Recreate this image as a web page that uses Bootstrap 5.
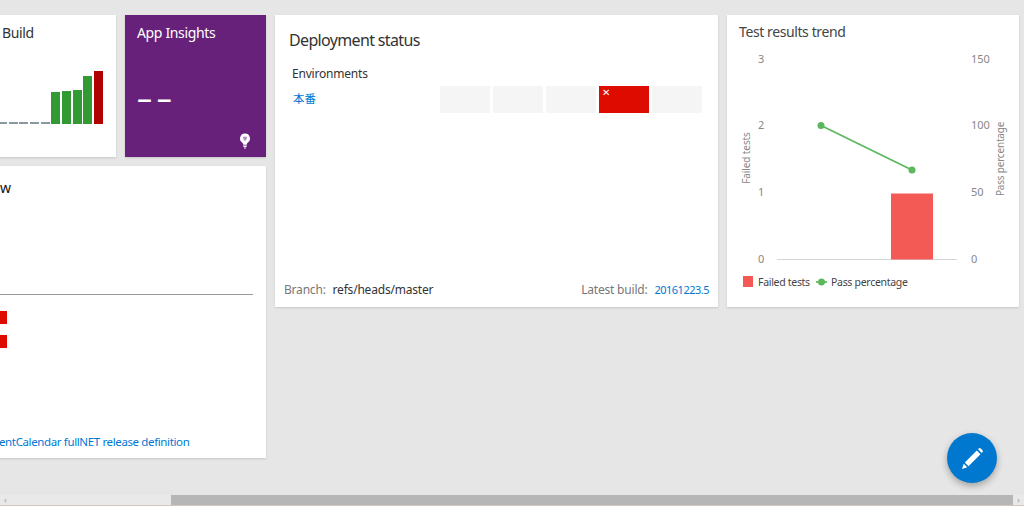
<!DOCTYPE html>
<html lang="en">
<head>
<meta charset="utf-8">
<title>Dashboard</title>
<link href="https://cdn.jsdelivr.net/npm/bootstrap@5.3.0/dist/css/bootstrap.min.css" rel="stylesheet">
<style>
html,body{height:100%}
body{background:#e6e6e6;font-family:"Noto Sans","Noto Sans CJK JP",sans-serif;color:#222;overflow:hidden}
.dash-main{flex:1 1 auto;min-height:0;overflow:hidden}
.dash-grid{display:grid;grid-template-columns:141px 141px 443px 292px;grid-template-rows:142px 141px 142px;gap:9px;margin:15px 0 0 -25px;width:1049px}
.tile{border:0;border-radius:0;background:#fff;box-shadow:0 1px 2px rgba(0,0,0,.14);position:relative;overflow:hidden}
.tile-title{font-size:14px;line-height:20px;color:#333;letter-spacing:-.35px}
.t-build{padding:8px 13px 0 27px}
.spark{height:62px;gap:1.67px;margin-top:19px;margin-left:-27px}
.spark-bar{width:9px;background:#339933}
.spark-bar.idle{background:#8a979e}
.spark-bar.bad{background:#b00000}
.t-insight{background:#68217a;color:#fff;padding:8px 12px}
.t-insight .tile-title{color:#fff}
.dash-value{font-size:30px;line-height:30px;margin-top:40px;letter-spacing:1px;word-spacing:-5px}
.bulb-ico{position:absolute;right:15px;bottom:8px}
.t-over{grid-column:1/3;grid-row:2/4;padding:12px 13px 8px 24px}
.over-title{font-size:14px;line-height:20px;color:#111;text-align:left;padding-left:1px}
.over-rule{height:1px;background:#999;margin-top:96px;margin-left:-24px}
.over-flag{width:32px;height:13px;background:#de0b00;margin-left:-24px;margin-top:11px}
.over-rule + .over-flag{margin-top:16px}
.tile-link{color:#0078d4;text-decoration:none}
.over-link{font-size:11.5px;line-height:16px;white-space:nowrap;letter-spacing:-.37px}
.t-deploy{grid-column:3;grid-row:1/3;padding:14px 9px 9px 9px}
.deploy-title{font-size:16px;line-height:22px;color:#333;padding-left:5px;letter-spacing:-.65px}
.env-head{font-size:12px;line-height:16px;margin:15px 0 0 8px;color:#333;letter-spacing:-.2px}
.env-row{margin:4px 7px 0 9px;height:27px}
.env-name{font-size:11.500px;line-height:16px;margin-top:-1px}
.env-cells{gap:2.6px}
.env-cell{width:50.4px;height:27px;background:#f5f5f5;position:relative}
.env-cell.fail{background:#de0b00;color:#fff}
.env-x{position:absolute;left:3px;top:0;font-size:10px;line-height:12px}
.deploy-foot{font-size:12px;line-height:16px;color:#777;letter-spacing:-.2px}
.deploy-foot b{font-weight:400;color:#333;margin-left:4px}
.deploy-foot a{font-size:11px;margin-left:4px;letter-spacing:-.5px}
.t-test{grid-column:4;grid-row:1/3;padding:8px 0 0 12px}
.trend-title{font-size:14px;line-height:18px;color:#444;letter-spacing:-.4px}
.trend-svg{position:absolute;left:0;top:0}
.trend-svg text{font-family:"Noto Sans",sans-serif;font-size:11px;fill:#888}
.trend-svg text.lg{fill:#444;font-size:10.5px;letter-spacing:-.3px}
.trend-svg text.ax{font-size:10px;letter-spacing:-.1px}
.trend-svg text.ax2{font-size:10px;letter-spacing:-.2px}
.scroll-strip{flex:0 0 11px;background:#e9e9e9;border-bottom:1px solid #cfc9bd}
.scroll-arrow{width:11px;font-size:9px;line-height:10px;color:#999;text-align:center}
.scroll-gap{width:160px}
.scroll-thumb{background:#b6b6b6}
.fab{position:absolute;left:947px;top:433px;width:50px;height:50px;border-radius:50%;background:#0078cf;box-shadow:0 3px 7px rgba(0,0,0,.3);padding:0;border:0}
</style>
</head>
<body class="d-flex flex-column">
<main class="dash-main">
  <div class="dash-grid">
    <section class="tile t-build">
      <div class="tile-title">Build</div>
      <div class="spark d-flex align-items-end justify-content-end">
        <div class="spark-bar idle" style="height:2.5px"></div>
        <div class="spark-bar idle" style="height:2.5px"></div>
        <div class="spark-bar idle" style="height:2.5px"></div>
        <div class="spark-bar idle" style="height:2.5px"></div>
        <div class="spark-bar idle" style="height:2.5px"></div>
        <div class="spark-bar" style="height:32px"></div>
        <div class="spark-bar" style="height:33px"></div>
        <div class="spark-bar" style="height:34px"></div>
        <div class="spark-bar" style="height:48px"></div>
        <div class="spark-bar bad" style="height:53px"></div>
      </div>
    </section>
    <section class="tile t-insight">
      <div class="tile-title">App Insights</div>
      <div class="dash-value">– –</div>
      <svg class="bulb-ico" width="12" height="16" viewBox="0 0 12 17" aria-hidden="true">
        <path d="M6 .5a5.2 5.2 0 0 0-3 9.5c.6.5.8 1 .8 1.6h4.4c0-.6.2-1.1.8-1.6a5.2 5.2 0 0 0-3-9.5z" fill="#fff"/>
        <path d="M3.6 4h4.8L7 8H5z" fill="#b48cc0"/>
        <path d="M4 12.6h4M4.3 14.3h3.4M5 16h2" stroke="#fff" stroke-width="1.1"/>
      </svg>
    </section>
    <section class="tile t-deploy d-flex flex-column">
      <div class="deploy-title">Deployment status</div>
      <div class="env-head">Environments</div>
      <div class="env-row d-flex justify-content-between align-items-center">
        <a class="tile-link env-name" href="#">本番</a>
        <div class="env-cells d-flex">
          <div class="env-cell"></div>
          <div class="env-cell"></div>
          <div class="env-cell"></div>
          <div class="env-cell fail"><span class="env-x">✕</span></div>
          <div class="env-cell"></div>
        </div>
      </div>
      <div class="deploy-foot d-flex justify-content-between mt-auto">
        <span>Branch: <b>refs/heads/master</b></span>
        <span>Latest build: <a class="tile-link" href="#">20161223.5</a></span>
      </div>
    </section>
    <section class="tile t-test">
      <div class="trend-title">Test results trend</div>
      <svg class="trend-svg" width="292" height="292" viewBox="727 15 292 292">
        <line x1="777" y1="259.5" x2="957" y2="259.5" stroke="#d6d6d6"/>
        <rect x="891" y="193.500" width="42" height="66" fill="#f35a56"/>
        <polyline points="821,125.500 912,170" fill="none" stroke="#5cb85c" stroke-width="1.700"/>
        <circle cx="821" cy="125.500" r="3.500" fill="#5cb85c"/>
        <circle cx="912" cy="170" r="3.500" fill="#5cb85c"/>
        <text x="758" y="63">3</text><text x="758" y="129">2</text><text x="758" y="196">1</text><text x="758" y="263">0</text>
        <text x="971" y="63">150</text><text x="971" y="129">100</text><text x="971" y="196">50</text><text x="971" y="263">0</text>
        <text class="ax" transform="translate(749.500 158) rotate(-90)" text-anchor="middle">Failed tests</text>
        <text class="ax2" transform="translate(1004 159) rotate(-90)" text-anchor="middle">Pass percentage</text>
        <rect x="743" y="276" width="10" height="11" fill="#f35a56"/>
        <text class="lg" x="758" y="286">Failed tests</text>
        <line x1="816" y1="282" x2="827" y2="282" stroke="#5cb85c" stroke-width="1.700"/>
        <circle cx="821.500" cy="282" r="3.500" fill="#5cb85c"/>
        <text class="lg" x="831" y="286">Pass percentage</text>
      </svg>
    </section>
    <section class="tile t-over d-flex flex-column">
      <div class="over-title">w</div>
      <div class="over-rule"></div>
      <div class="over-flag"></div>
      <div class="over-flag"></div>
      <a class="tile-link over-link mt-auto" href="#">entCalendar fullNET release definition</a>
    </section>
  </div>
</main>
<div class="scroll-strip d-flex">
  <div class="scroll-arrow">‹</div>
  <div class="scroll-gap"></div>
  <div class="scroll-thumb flex-grow-1"></div>
  <div class="scroll-arrow">›</div>
</div>
<button class="fab d-flex align-items-center justify-content-center" type="button" aria-label="Edit">
  <svg width="21" height="21" viewBox="0 0 21 21" aria-hidden="true">
    <path d="M0 21l1.700-5.300 3.600 3.600z" fill="#fff"/>
    <path d="M2.800 14.500L14.800 2.500l3.700 3.700-12 12z" fill="#fff"/>
    <path d="M16 1.300l.7-.7a1.500 1.500 0 0 1 2.100 0l1.600 1.600a1.500 1.500 0 0 1 0 2.100l-.7.700z" fill="#fff"/>
  </svg>
</button>
<script src="https://cdn.jsdelivr.net/npm/bootstrap@5.3.0/dist/js/bootstrap.bundle.min.js"></script>
</body>
</html>
